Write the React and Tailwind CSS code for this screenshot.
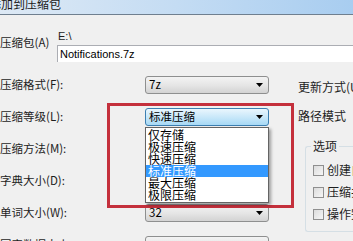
const cjk = { fontFamily: '"Noto Sans CJK SC", "Liberation Sans", sans-serif' };

function Arrow() {
	return (
		<svg width="7" height="4" viewBox="0 0 7 4" className="shrink-0">
			<path d="M0 0 H7 L3.5 4 Z" fill="#000" />
		</svg>
	);
}

function Combo({ value, focused }) {
	return (
		<div
			className={`flex h-[18px] w-[124px] items-center justify-between rounded-[3px] border pl-[3px] pr-[5px] text-[11.5px] leading-none text-black ${
				focused
					? 'border-[#3c7fb1] bg-gradient-to-b from-[#eaf6fd] via-[#c9e8f9] to-[#a7d9f5]'
					: 'border-[#8e8f8f] bg-gradient-to-b from-[#f3f3f3] via-[#e6e6e6] to-[#d3d3d3]'
			}`}
		>
			<span>{value}</span>
			<Arrow />
		</div>
	);
}

function Row({ label, children, className = '' }) {
	return (
		<div className={`relative flex h-[18px] items-center ${className}`}>
			<div className="w-[145px] text-[11.5px] text-[#1e1e1e]">{label}</div>
			{children}
		</div>
	);
}

function Check({ label }) {
	return (
		<div className="flex h-[12px] items-center gap-[3px] whitespace-nowrap">
			<div className="h-[11px] w-[11px] shrink-0 border border-[#8f8f8f] bg-gradient-to-br from-[#dcdcdc] to-[#f6f6f6]" />
			<span className="text-[12px] text-[#1e1e1e]">{label}</span>
		</div>
	);
}

const levels = ['仅存储', '极速压缩', '快速压缩', '标准压缩', '最大压缩', '极限压缩'];

export default function App() {
	return (
		<div className="relative h-[241px] w-[353px] overflow-hidden bg-[#f0f0f0]" style={cjk}>
			{/* title bar */}
			<div className="flex h-[15px] items-start border-b border-[#6f7f8f] bg-gradient-to-r from-[#dde9f5] via-[#c4dcf3] to-[#a8cdf0]">
				<span className="-ml-[11px] -mt-[3px] whitespace-nowrap text-[12px] leading-[14px] text-[#1a1a1a]">添加到压缩包</span>
			</div>

			{/* archive path */}
			<div className="flex items-start pt-[15px]">
				<div className="mt-[6px] w-[57px] whitespace-nowrap text-[11.5px] leading-[12px] text-[#1e1e1e]">压缩包(A)</div>
				<div className="flex flex-1 flex-col">
					<div className="h-[12px] pl-[1px] text-[11px] leading-[12px] text-[#1e1e1e]" style={{ fontFamily: '"Liberation Sans", sans-serif' }}>
						E:\
					</div>
					<div
						className="mt-[3px] flex h-[17px] items-center border-l border-t border-[#abadb3] bg-white pl-[2px] text-[11px] text-black"
						style={{ fontFamily: '"Liberation Sans", sans-serif' }}
					>
						Notifications.7z
					</div>
				</div>
			</div>

			{/* options */}
			<div className="mt-[14px] flex">
				<div className="flex w-[298px] shrink-0 flex-col gap-[14px]">
					<Row label="压缩格式(F):">
						<Combo value="7z" />
					</Row>
					<Row label="压缩等级(L):">
						<Combo value="标准压缩" focused />
						<div className="absolute left-[145px] top-[19px] z-10 w-[124px] border border-[#646464] bg-white py-[1px] shadow-[2px_2px_3px_rgba(0,0,0,0.35)]">
							{levels.map((l) => (
								<div
									key={l}
									className={`h-[12px] pl-[2px] text-[12px] leading-[12px] ${
										l === '标准压缩' ? 'bg-[#3399ff] text-white' : 'text-black'
									}`}
								>
									{l}
								</div>
							))}
						</div>
					</Row>
					<Row label="压缩方法(M):">
						<Combo value="" />
					</Row>
					<Row label="字典大小(D):">
						<Combo value="" />
					</Row>
					<Row label="单词大小(W):">
						<Combo value="32" />
					</Row>
					<Row label="固实数据大小:">
						<Combo value="" />
					</Row>
				</div>

				<div className="flex min-w-0 flex-1 flex-col">
					<div className="flex h-[18px] items-center pt-[4px] whitespace-nowrap text-[12px] text-[#1e1e1e]">更新方式(U):</div>
					<div className="mt-[13px] flex h-[18px] items-center whitespace-nowrap text-[12px] text-[#1e1e1e]">路径模式</div>
					<div className="relative ml-[7px] mt-[21px] flex h-[86px] flex-col gap-[10px] rounded-l-[3px] border border-r-0 border-[#d5dfe5] pl-[7px] pt-[17px]">
						<span className="absolute -top-[9px] left-[5px] bg-[#f0f0f0] px-[2px] text-[12px] leading-[16px] text-[#1e1e1e]">选项</span>
						<Check label="创建自释放程序" />
						<Check label="压缩共享文件" />
						<Check label="操作完成后删除源文件" />
					</div>
				</div>
			</div>

			{/* annotation */}
			<div className="pointer-events-none absolute left-[107px] top-[103px] h-[105px] w-[187px] border-[3px] border-[#c4303c]" />
		</div>
	);
}
